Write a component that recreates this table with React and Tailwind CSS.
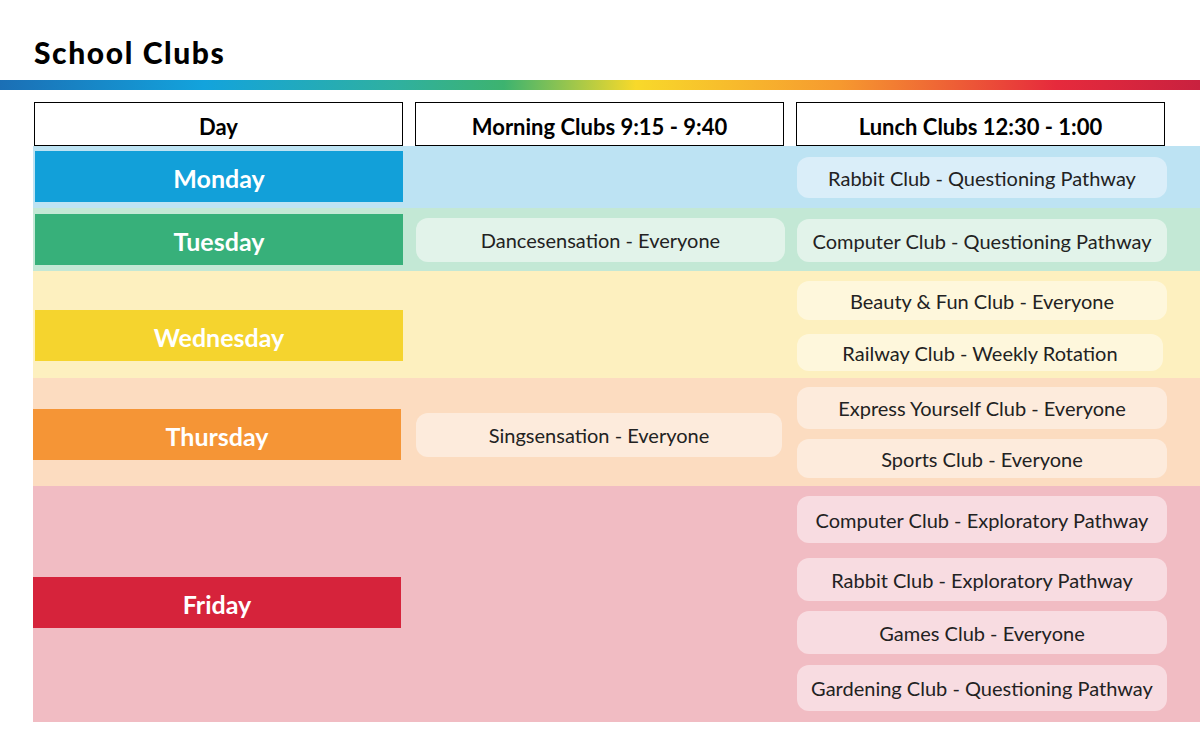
import React from 'react';

const rows = [
  {
    day: 'Monday',
    band: 'bg-[#bde3f3]',
    bar: 'bg-[#12a0d9]',
    pill: 'bg-[#daeef9]',
    h: 'h-[62px]',
    barTop: 'mt-[5px]',
    morning: null,
    morningTop: '',
    lunchTop: 'pt-[11px]',
    lunch: [{ t: 'Rabbit Club - Questioning Pathway', h: 'h-[41px]', g: '' }],
  },
  {
    day: 'Tuesday',
    band: 'bg-[#c3e8d5]',
    bar: 'bg-[#37b07a]',
    pill: 'bg-[#e2f3ea]',
    h: 'h-[63px]',
    barTop: 'mt-[6px]',
    morning: 'Dancesensation - Everyone',
    morningTop: 'mt-[10px]',
    lunchTop: 'pt-[11px]',
    lunch: [{ t: 'Computer Club - Questioning Pathway', h: 'h-[43px]', g: '' }],
  },
  {
    day: 'Wednesday',
    band: 'bg-[#fdf0bf]',
    bar: 'bg-[#f5d42e]',
    pill: 'bg-[#fef7dc]',
    h: 'h-[107px]',
    barTop: 'mt-[39px]',
    morning: null,
    morningTop: '',
    lunchTop: 'pt-[10px]',
    lunch: [
      { t: 'Beauty & Fun Club - Everyone', h: 'h-[39px]', g: '' },
      { t: 'Railway Club - Weekly Rotation', h: 'h-[37px]', g: 'mt-[14px] mr-[4px]' },
    ],
  },
  {
    day: 'Thursday',
    band: 'bg-[#fcdcc0]',
    bar: 'bg-[#f59536]',
    pill: 'bg-[#fdebdc]',
    h: 'h-[108px]',
    barTop: 'mt-[31px] -ml-[2px]',
    morning: 'Singsensation - Everyone',
    morningTop: 'mt-[35px] mr-[3px]',
    lunchTop: 'pt-[9px]',
    lunch: [
      { t: 'Express Yourself Club - Everyone', h: 'h-[42px]', g: '' },
      { t: 'Sports Club - Everyone', h: 'h-[39px]', g: 'mt-[10px]' },
    ],
  },
  {
    day: 'Friday',
    band: 'bg-[#f1bcc3]',
    bar: 'bg-[#d6233b]',
    pill: 'bg-[#f8dce1]',
    h: 'h-[236px]',
    barTop: 'mt-[91px] -ml-[2px]',
    morning: null,
    morningTop: '',
    lunchTop: 'pt-[10px]',
    lunch: [
      { t: 'Computer Club - Exploratory Pathway', h: 'h-[47px]', g: '' },
      { t: 'Rabbit Club - Exploratory Pathway', h: 'h-[43px]', g: 'mt-[15px]' },
      { t: 'Games Club - Everyone', h: 'h-[43px]', g: 'mt-[10px]' },
      { t: 'Gardening Club - Questioning Pathway', h: 'h-[46px]', g: 'mt-[11px]' },
    ],
  },
];

const HeaderBox = ({ children }) => (
  <div className="w-[369px] h-[44px] border border-black flex items-center justify-center pt-[4px] text-[22px] font-bold text-black">
    {children}
  </div>
);

const App = () => {
  return (
    <div className="w-[1200px] h-[750px] bg-white overflow-hidden font-['Lato',sans-serif]">
      <h1 className="pl-[34px] pt-[37px] h-[80px] text-[30px] font-black text-black leading-none tracking-[1.6px]">
        School Clubs
      </h1>
      <div className="h-[10px] w-full bg-[linear-gradient(90deg,#1b6fb5_0%,#13a3dc_17%,#2fb0a0_33%,#3db36f_42%,#f8d92a_53%,#f6992f_70%,#e62a3c_88%,#c9213f_100%)]" />

      <div className="pl-[34px] pt-[12px] flex gap-[12px]">
        <HeaderBox>Day</HeaderBox>
        <HeaderBox>Morning Clubs 9:15 - 9:40</HeaderBox>
        <HeaderBox>Lunch Clubs 12:30 - 1:00</HeaderBox>
      </div>

      <div className="ml-[33px]">
        {rows.map((r) => (
          <div key={r.day} className={`flex ${r.band} ${r.h}`}>
            <div className="w-[370px] pl-[2px]">
              <div className={`${r.barTop} h-[51px] w-[368px] ${r.bar} flex items-center justify-center pt-[4px] text-white text-[25px] font-bold`}>
                {r.day}
              </div>
            </div>
            <div className="w-[369px] ml-[13px]">
              {r.morning && (
                <div className={`${r.morningTop} h-[44px] ${r.pill} rounded-[12px] flex items-center justify-center text-[20px] text-[#222]`}>
                  {r.morning}
                </div>
              )}
            </div>
            <div className={`w-[370px] ml-[12px] flex flex-col ${r.lunchTop}`}>
              {r.lunch.map((p) => (
                <div
                  key={p.t}
                  className={`${p.h} ${p.g} ${r.pill} rounded-[12px] flex items-center justify-center text-[20px] text-[#222]`}
                >
                  {p.t}
                </div>
              ))}
            </div>
          </div>
        ))}
      </div>
    </div>
  );
};

export default App;
